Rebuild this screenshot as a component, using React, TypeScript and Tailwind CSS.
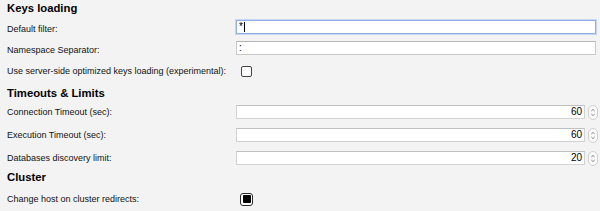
import React from 'react';

const Spinner: React.FC = () => (
  <svg width="10" height="15" viewBox="0 0 10 15" className="ml-[3px] shrink-0">
    <rect x="0.5" y="0.5" width="9" height="14" rx="4.5" fill="#fafafa" stroke="#cfcfcf" />
    <path d="M3.3 6 L5 4.4 L6.7 6" fill="none" stroke="#777" strokeWidth="0.9" />
    <path d="M3.3 9 L5 10.6 L6.7 9" fill="none" stroke="#777" strokeWidth="0.9" />
  </svg>
);

const Heading: React.FC<{ title: string; mt: string }> = ({ title, mt }) => (
  <div className={`${mt} h-[14px] shrink-0 flex items-center pl-[7px]`}>
    <h2 className="text-[11.3px] font-bold text-black leading-none">{title}</h2>
  </div>
);

const TextRow: React.FC<{ label: string; value: string; focused?: boolean; mt: string }> = ({ label, value, focused, mt }) => (
  <div className={`${mt} h-[14px] shrink-0 flex items-center pl-[7px]`}>
    <label className="w-[229px] shrink-0 text-[9px] text-[#111] pt-[4px] leading-none">{label}</label>
    <div
      className={
        focused
          ? 'w-[360px] h-[14px] bg-white border border-[#8fb0e4] shadow-[0_0_0_1px_#c5d6f1] flex items-center pl-[2px] text-[10px] text-black'
          : 'w-[360px] h-[14px] bg-white border border-[#c9c9c9] border-t-[#b5b5b5] flex items-center pl-[2px] text-[10px] text-black'
      }
    >
      <span className="leading-none">{value}</span>
      {focused && <span className="w-px h-[10px] bg-black ml-[1px]" />}
    </div>
  </div>
);

const NumberRow: React.FC<{ label: string; value: string; mt: string }> = ({ label, value, mt }) => (
  <div className={`${mt} h-[14px] shrink-0 flex items-center pl-[7px]`}>
    <label className="w-[229px] shrink-0 text-[9px] text-[#111] leading-none">{label}</label>
    <div className="w-[349px] h-[14px] bg-white border border-[#d2d2d2] border-t-[#c0c0c0] flex items-center justify-end pr-[2px] text-[10px] text-black">
      <span className="leading-none">{value}</span>
    </div>
    <Spinner />
  </div>
);

const CheckRow: React.FC<{ label: string; checked?: boolean; mt: string; offset: string }> = ({ label, checked, mt, offset }) => (
  <div className={`${mt} h-[14px] shrink-0 flex items-center pl-[7px]`}>
    <label className={`${offset} shrink-0 text-[9px] text-[#111] leading-none`}>{label}</label>
    {checked ? (
      <div className="w-[13px] h-[13px] rounded-[3px] border border-[#2a2a2a] bg-white flex items-center justify-center">
        <div className="w-[8px] h-[8px] rounded-[1px] bg-black" />
      </div>
    ) : (
      <div className="w-[11px] h-[11px] rounded-[2px] border border-[#444] bg-white" />
    )}
  </div>
);

export default function App() {
  return (
    <div
      className="w-[600px] h-[211px] bg-[#f3f3f3] flex flex-col overflow-hidden"
      style={{ fontFamily: '"Liberation Sans", Arial, sans-serif' }}
    >
      <Heading title="Keys loading" mt="mt-[2px]" />
      <TextRow label="Default filter:" value="*" focused mt="mt-[4px]" />
      <TextRow label="Namespace Separator:" value=":" mt="mt-[7px]" />
      <CheckRow label="Use server-side optimized keys loading (experimental):" mt="mt-[9px]" offset="w-[234px]" />
      <Heading title="Timeouts & Limits" mt="mt-[9px]" />
      <NumberRow label="Connection Timeout (sec):" value="60" mt="mt-[4px]" />
      <NumberRow label="Execution Timeout (sec):" value="60" mt="mt-[9px]" />
      <NumberRow label="Databases discovery limit:" value="20" mt="mt-[9px]" />
      <Heading title="Cluster" mt="mt-[6px]" />
      <CheckRow label="Change host on cluster redirects:" checked mt="mt-[7px]" offset="w-[233px]" />
    </div>
  );
}
